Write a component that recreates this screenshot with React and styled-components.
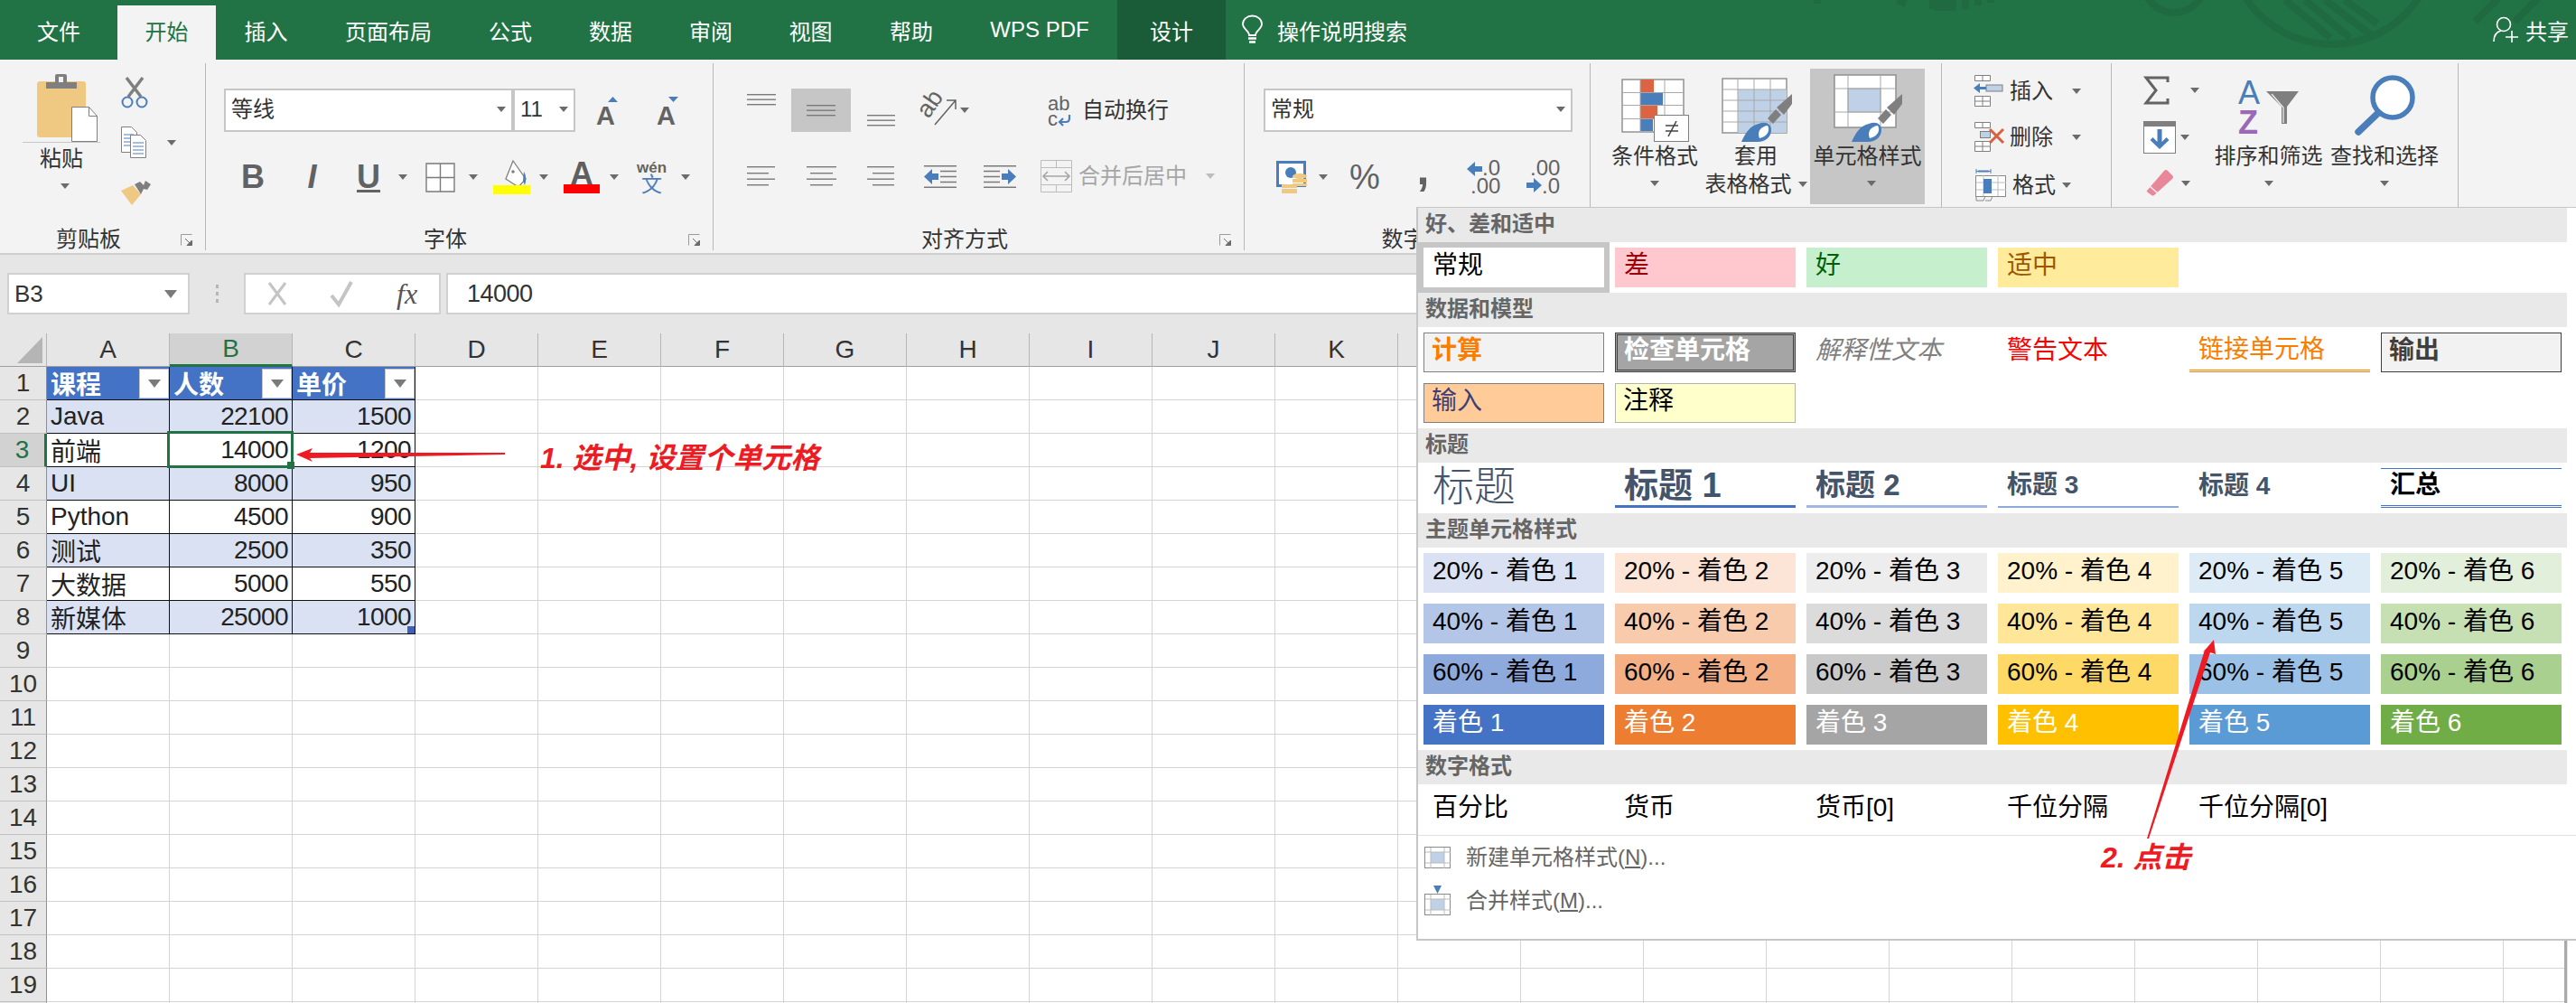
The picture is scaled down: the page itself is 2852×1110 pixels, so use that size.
import React from "react";
import styled, { createGlobalStyle, css } from "styled-components";

const FONT = `"Liberation Sans", "Noto Sans CJK SC", sans-serif`;
const GREEN = "#217346";
const GRAY = "#6b6b6b";
const BLUE = "#4a7eba";

const Global = createGlobalStyle`
  html, body { margin: 0; padding: 0; background: #fff; }
  body { width: 2852px; height: 1110px; overflow: hidden; font-family: ${FONT}; }
  * { box-sizing: border-box; }
`;

const Page = styled.div`
  position: relative;
  width: 2852px;
  height: 1110px;
  overflow: hidden;
  display: flex;
  flex-direction: column;
`;

/* title bar */
const TitleBar = styled.div`
  position: relative;
  flex: none;
  height: 66px;
  display: flex;
  align-items: stretch;
  background: ${GREEN};
  color: #fff;
  font-size: 24px;
`;
const Pattern = styled.svg`
  position: absolute;
  left: 0;
  top: 0;
`;
const Tab = styled.div`
  position: relative;
  flex: none;
  width: ${(p) => p.$w}px;
  display: flex;
  align-items: center;
  justify-content: center;
  ${(p) => p.$active && css`
    margin-top: 6px;
    padding-bottom: 6px;
    background: #f3f3f3;
    color: ${GREEN};
  `}
  ${(p) => p.$dark && css`background: #1a5c38;`}
`;
const Search = styled.div`
  position: relative;
  display: flex;
  align-items: center;
  gap: 14px;
  margin-left: 18px;
`;
const Share = styled.div`
  position: relative;
  display: flex;
  align-items: center;
  gap: 8px;
  margin-left: auto;
  padding-right: 8px;
`;

/* ribbon */
const Ribbon = styled.div`
  flex: none;
  height: 216px;
  display: flex;
  align-items: flex-start;
  background: #f3f3f3;
  border-bottom: 2px solid #cfcfcf;
  color: #333;
  font-size: 24px;
  line-height: 30px;
`;
const Group = styled.div`
  flex: none;
  width: ${(p) => p.$w}px;
  height: 207px;
  margin-top: 4px;
  display: flex;
  flex-direction: column;
  border-right: 1px solid #b8b8b8;
`;
const GroupBody = styled.div`
  flex: 1;
  display: flex;
  flex-direction: ${(p) => (p.$row ? "row" : "column")};
  align-items: flex-start;
`;
const GroupFooter = styled.div`
  flex: none;
  height: 30px;
  padding-top: 6px;
  display: flex;
  align-items: flex-start;
  line-height: 24px;
`;
const GroupLabel = styled.div`
  flex: 1;
  text-align: center;
`;
const Launcher = styled.svg`
  flex: none;
  margin: 6px 14px 0 4px;
`;
const Line = styled.div`
  flex: none;
  display: flex;
  align-items: ${(p) => p.$align || "center"};
  height: ${(p) => p.$h}px;
  margin-top: ${(p) => p.$mt || 0}px;
  padding-left: ${(p) => p.$pl || 0}px;
`;
const Stack = styled.div`
  flex: none;
  display: flex;
  flex-direction: column;
  align-items: flex-start;
  width: ${(p) => (p.$w ? `${p.$w}px` : "auto")};
  padding-top: ${(p) => p.$pt || 0}px;
  margin-left: ${(p) => p.$ml || 0}px;
`;
const Ico = styled.svg`
  display: block;
  flex: none;
  overflow: visible;
  margin-left: ${(p) => p.$ml || 0}px;
  margin-top: ${(p) => p.$mt || 0}px;
`;
const Caret = styled.i`
  display: block;
  flex: none;
  width: 0;
  height: 0;
  border-left: 5px solid transparent;
  border-right: 5px solid transparent;
  border-top: 6px solid ${(p) => p.$c || GRAY};
  margin-left: ${(p) => p.$ml || 0}px;
  margin-top: ${(p) => p.$mt || 0}px;
`;
const ToolText = styled.span`
  flex: none;
  margin-left: ${(p) => p.$ml || 0}px;
  color: ${(p) => p.$c || "#333"};
  white-space: nowrap;
`;
const Mark = styled.span`
  flex: none;
  display: block;
  width: ${(p) => p.$w}px;
  margin-left: ${(p) => p.$ml}px;
  padding-bottom: ${(p) => p.$pb || 0}px;
  color: #626262;
  font-size: ${(p) => p.$size}px;
  line-height: 1;
  text-align: center;
  font-weight: ${(p) => (p.$bold ? 700 : 400)};
  font-style: ${(p) => (p.$italic ? "italic" : "normal")};
  text-decoration: ${(p) => (p.$under ? "underline" : "none")};
`;
const Select = styled.div`
  flex: none;
  display: flex;
  align-items: center;
  justify-content: space-between;
  width: ${(p) => p.$w}px;
  height: 48px;
  padding: 0 6px 2px;
  margin-left: ${(p) => p.$ml || 0}px;
  background: #fff;
  border: 2px solid #c6c6c6;
  font-size: 24px;
`;
const PasteBox = styled.div`
  width: 86px;
  margin-left: 25px;
  padding-top: 12px;
  display: flex;
  flex-direction: column;
  align-items: center;
`;
const PasteIcon = styled.div`
  align-self: stretch;
  padding-left: 16px;
  border-bottom: 1px solid #c6c6c6;
`;
const PasteText = styled.div`
  margin-top: 1px;
  line-height: 34px;
`;
const AlignBox = styled.div`
  flex: none;
  width: ${(p) => p.$w}px;
  height: 48px;
  margin-left: ${(p) => p.$ml}px;
  display: flex;
  align-items: center;
  justify-content: center;
  background: #c6c6c6;
`;
const BigButton = styled.div`
  flex: none;
  width: ${(p) => p.$w}px;
  height: 150px;
  margin-left: ${(p) => p.$ml || 0}px;
  padding-top: ${(p) => p.$pt || 0}px;
  display: flex;
  flex-direction: column;
  align-items: center;
  background: ${(p) => (p.$on ? "#c6c6c6" : "transparent")};
  line-height: 31px;
  white-space: nowrap;
`;
const BigLine = styled.div`
  display: flex;
  align-items: center;
  gap: 7px;
  height: 31px;
`;

/* formula bar */
const FormulaBar = styled.div`
  flex: none;
  height: 87px;
  padding: 20px 8px 0;
  display: flex;
  align-items: flex-start;
  background: #e6e6e6;
  color: #333;
`;
const NameBox = styled.div`
  flex: none;
  width: 202px;
  height: 46px;
  padding: 0 12px 0 6px;
  display: flex;
  align-items: center;
  justify-content: space-between;
  background: #fff;
  border: 2px solid #d0d0d0;
  font-size: 26px;
`;
const Dots = styled.div`
  flex: none;
  width: 3px;
  height: 20px;
  margin: 13px 28px 0 29px;
  background: repeating-linear-gradient(#b4b4b4 0 4px, transparent 4px 8px);
`;
const FxBox = styled.div`
  flex: none;
  width: 218px;
  height: 46px;
  padding-left: 23px;
  display: flex;
  align-items: center;
  gap: 46px;
  background: #fff;
  border: 2px solid #d0d0d0;
`;
const FxText = styled.span`
  margin-left: 2px;
  color: #555;
  font-family: "Liberation Serif", serif;
  font-style: italic;
  font-size: 32px;
`;
const FormulaInput = styled.div`
  flex: 1;
  height: 46px;
  margin-left: 6px;
  padding-left: 21px;
  display: flex;
  align-items: center;
  background: #fff;
  border: 2px solid #d0d0d0;
  font-size: 27px;
  letter-spacing: -0.5px;
`;

/* sheet */
const SheetArea = styled.div`
  flex: 1;
  display: flex;
  align-items: stretch;
  background: #fff;
`;
const Sheet = styled.div`
  flex: none;
  width: 2839px;
  overflow: hidden;
  display: grid;
  grid-template-columns: 52px repeat(21, 136px);
  grid-auto-rows: 37px;
`;
const SheetEdge = styled.div`
  flex: none;
  width: 4px;
  border-left: 3px solid #a9a9a9;
  border-right: 1px solid #e6e6e6;
`;
const Corner = styled.div`
  display: flex;
  align-items: flex-end;
  justify-content: flex-end;
  padding: 0 4px 3px 0;
  background: #e6e6e6;
  border-right: 1px solid #b5b5b5;
  border-bottom: 1px solid #9f9f9f;
`;
const ColHead = styled.div`
  display: flex;
  align-items: center;
  justify-content: center;
  background: ${(p) => (p.$on ? "#d2d2d2" : "#e6e6e6")};
  color: ${(p) => (p.$on ? GREEN : "#333")};
  border-right: 1px solid #b5b5b5;
  border-bottom: ${(p) => (p.$on ? `3px solid ${GREEN}` : "1px solid #9f9f9f")};
  font-size: 28px;
`;
const RowHead = styled.div`
  display: flex;
  align-items: center;
  justify-content: center;
  background: ${(p) => (p.$on ? "#d2d2d2" : "#e6e6e6")};
  color: ${(p) => (p.$on ? GREEN : "#333")};
  border-right: ${(p) => (p.$on ? `3px solid ${GREEN}` : "1px solid #8f8f8f")};
  border-bottom: 1px solid #c0c0c0;
  font-size: 28px;
`;
const Cell = styled.div`
  position: relative;
  display: flex;
  align-items: center;
  justify-content: ${(p) => (p.$num ? "flex-end" : "space-between")};
  padding: ${(p) => (p.$num ? "0 4px 0 0" : "0 0 0 4px")};
  color: #222;
  font-size: 28px;
  letter-spacing: ${(p) => (p.$num ? "-0.6px" : "0")};
  white-space: nowrap;
  border-right: 1px solid #d4d4d4;
  border-bottom: 1px solid #d4d4d4;
  ${(p) => p.$table && css`
    background: ${p.$band ? "#d9e1f2" : "#fff"};
    border-right-color: #111;
    border-bottom-color: #111;
  `}
  ${(p) => p.$head && css`
    background: #4472c4;
    color: #fff;
    font-weight: 700;
  `}
`;
const FilterBtn = styled.span`
  flex: none;
  width: 33px;
  height: 33px;
  margin-top: 1px;
  display: flex;
  align-items: center;
  justify-content: center;
  background: #fff;
  border: 1px solid #c6c6c6;
`;
const Selection = styled.span`
  position: absolute;
  top: -3px;
  left: -3px;
  right: -2px;
  bottom: -2px;
  border: 3px solid ${GREEN};
  z-index: 2;
`;
const Handle = styled.span`
  position: absolute;
  right: -4px;
  bottom: -4px;
  width: 8px;
  height: 8px;
  background: ${GREEN};
`;
const ResizeMark = styled.span`
  position: absolute;
  right: 0;
  bottom: 0;
  width: 8px;
  height: 8px;
  background: #4060b8;
`;

/* cell style gallery */
const Gallery = styled.div`
  position: absolute;
  left: 1568px;
  top: 229px;
  width: 1284px;
  height: 812px;
  background: #fff;
  border-top: 1px solid #c6c6c6;
  border-left: 2px solid #c6c6c6;
  border-bottom: 2px solid #c6c6c6;
  z-index: 3;
`;
const SectionHead = styled.div`
  height: 38px;
  margin-right: 10px;
  padding: 0 0 3px 8px;
  display: flex;
  align-items: center;
  background: #e9e9e9;
  color: #666;
  font-size: 24px;
  line-height: 30px;
  font-weight: 700;
`;
const StyleGrid = styled.div`
  display: grid;
  grid-template-columns: repeat(6, 200px);
  grid-auto-rows: 44px;
  gap: 12px;
  padding: 6px;
`;

const variants = {
  normal: css`background: #fff; color: #000; box-shadow: 0 0 0 6px #c6c6c6;`,
  bad: css`background: #ffc7ce; color: #9c0006;`,
  good: css`background: #c6efce; color: #006100;`,
  neutral: css`background: #ffeb9c; color: #9c5700;`,
  calc: css`background: #f2f2f2; color: #fa7d00; font-weight: 700; border: 1px solid #7f7f7f; padding-left: 8px;`,
  check: css`background: #a5a5a5; color: #fff; font-weight: 700; border: 3px double #3f3f3f; padding-left: 7px;`,
  explain: css`color: #7f7f7f; font-style: italic;`,
  warn: css`color: #ff0000;`,
  link: css`color: #fa7d00; border-bottom: 3px double #ff8001;`,
  output: css`background: #f2f2f2; color: #3f3f3f; font-weight: 700; border: 1px solid #3f3f3f; padding-left: 8px;`,
  input: css`background: #ffcc99; color: #3f3f76; border: 1px solid #7f7f7f; padding-left: 8px;`,
  note: css`background: #ffffcc; color: #000; border: 1px solid #b2b2b2; padding-left: 8px;`,
  title: css`color: #44546a; font-size: 46px; font-weight: 300;`,
  h1: css`color: #44546a; font-size: 38px; font-weight: 700; border-bottom: 3px solid #4472c4;`,
  h2: css`color: #44546a; font-size: 33px; font-weight: 700; border-bottom: 3px solid #a2b8e1;`,
  h3: css`color: #44546a; font-weight: 700; border-bottom: 2px solid #8ea9db;`,
  h4: css`color: #44546a; font-weight: 700;`,
  total: css`color: #000; font-weight: 700; border-top: 1px solid #4472c4; border-bottom: 3px double #4472c4;`,
};
const StyleCell = styled.div`
  display: flex;
  align-items: center;
  min-width: 0;
  padding: 0 0 4px 10px;
  color: #000;
  font-size: 28px;
  line-height: 34px;
  white-space: nowrap;
  background: ${(p) => p.$bg || "transparent"};
  ${(p) => p.$fg && css`color: ${p.$fg};`}
  ${(p) => p.$kind && variants[p.$kind]}
`;
const Separator = styled.div`
  height: 1px;
  background: #e0e0e0;
`;
const MenuItem = styled.div`
  height: 48px;
  padding-left: 7px;
  display: flex;
  align-items: center;
  gap: 16px;
  color: #666;
  font-size: 24px;
  line-height: 30px;
  &:first-of-type { margin-top: 1px; }
`;

/* red notes painted over the screenshot */
const Overlay = styled.svg`
  position: absolute;
  left: 0;
  top: 0;
  z-index: 5;
  pointer-events: none;
`;
const Note = styled.div`
  position: absolute;
  left: ${(p) => p.$x}px;
  top: ${(p) => p.$y}px;
  z-index: 6;
  color: #ed1c24;
  font-size: 32px;
  line-height: 40px;
  font-style: italic;
  font-weight: 700;
  white-space: nowrap;
`;

/* icons */
const Lines = ({ w = 32, h = 13, ml, mt, rows, c = "#7a7a7a" }) => (
  <Ico width={w} height={h} viewBox={`0 0 ${w} ${h}`} $ml={ml} $mt={mt}>
    {rows.map(([x, y, l], i) => (
      <rect key={i} x={x} y={y} width={l} height="1.4" fill={c} />
    ))}
  </Ico>
);
const three = (w) => [[0, 0, w], [0, 5.5, w], [0, 11, w]];
const alignRows = {
  left: [[0, 0, 31], [0, 7, 24], [0, 13.5, 31], [0, 20, 24]],
  center: [[0, 0, 33], [4, 7, 25], [0, 13.5, 33], [4, 20, 25]],
  right: [[0, 0, 30], [6, 7, 24], [0, 13.5, 30], [6, 20, 24]],
};

const PasteSvg = () => (
  <Ico width="67" height="75" viewBox="0 0 67 75">
    <rect x="0" y="8" width="54" height="62" rx="3" fill="#efc881" />
    <path d="M10 16V9h10V2q0-2 2-2h9q2 0 2 2v7h11v7z" fill="#7f7f7f" />
    <rect x="24" y="3" width="5" height="6" fill="#f3f3f3" />
    <path d="M38.5 36.5h19l9 10v28h-28z" fill="#fff" stroke="#7f7f7f" />
    <path d="M57.500 36.500v10h9" fill="none" stroke="#7f7f7f" />
  </Ico>
);
const CutSvg = () => (
  <Ico width="30" height="34" viewBox="0 0 30 34">
    <path d="M6 0L22 21M24 0L8 21" stroke="#7f7f7f" strokeWidth="3.500" fill="none" />
    <circle cx="7" cy="27" r="5.500" fill="none" stroke={BLUE} strokeWidth="2" />
    <circle cx="23" cy="27" r="5.500" fill="none" stroke={BLUE} strokeWidth="2" />
  </Ico>
);
const CopySvg = () => (
  <Ico width="30" height="35" viewBox="0 0 30 35" $mt={0}>
    <path d="M.500.500h11l6 6v22H.500z" fill="#fff" stroke="#7f7f7f" />
    <path d="M3 9h11M3 13h11M3 17h11M3 21h11" stroke={BLUE} />
    <path d="M10.500 9.500h11l6 6v19h-17z" fill="#fff" stroke="#7f7f7f" />
    <path d="M13 18h12M13 22h12M13 26h12M13 30h12" stroke={BLUE} />
  </Ico>
);
const BrushSvg = () => (
  <Ico width="33" height="27" viewBox="0 0 33 27" $mt={25}>
    <path d="M0 11l13-6 9 10-10 12z" fill="#efc881" />
    <path d="M15 4l6-3 4 4 2-5 6 4-4 6-4-1-3 6z" fill="#7f7f7f" />
  </Ico>
);
const GrowSvg = ({ down, ml }) => (
  <Ico width="25" height="31" viewBox="0 0 25 31" $ml={ml}>
    <text x="0" y="31" fontFamily="Liberation Sans" fontWeight="700" fontSize="29" fill="#636363">A</text>
    <path d={down ? "M13 0h11l-5.500 6z" : "M13 6h11l-5.500-6z"} fill={BLUE} />
  </Ico>
);
const BordersSvg = ({ ml }) => (
  <Ico width="33" height="33" viewBox="0 0 33 33" $ml={ml}>
    <path d="M1 1h31v31H1zM16.500 1v31M1 16.500h31" fill="#fff" stroke="#7a7a7a" strokeWidth="1.400" />
  </Ico>
);
const FillSvg = ({ ml }) => (
  <Ico width="41" height="38" viewBox="0 0 41 38" $ml={ml}>
    <path d="M22 1l14 20-8 9-14-9z" fill="#fff" stroke="#7f7f7f" strokeWidth="1.300" />
    <path d="M34 13q4 6 1 15l-2-5z" fill={BLUE} />
    <circle cx="22" cy="13" r="1.800" fill="#7f7f7f" />
    <rect x="0" y="28" width="41" height="10" fill="#ffff00" />
  </Ico>
);
const FontColorSvg = ({ ml }) => (
  <Ico width="40" height="36" viewBox="0 0 40 36" $ml={ml}>
    <text x="20" y="27" textAnchor="middle" fontFamily="Liberation Sans" fontWeight="700" fontSize="36" fill="#5f5f5f">A</text>
    <rect x="0" y="26" width="40" height="10" fill="#ff0000" />
  </Ico>
);
const WenSvg = ({ ml }) => (
  <Ico width="33" height="36" viewBox="0 0 33 36" $ml={ml}>
    <text x="16.500" y="13" textAnchor="middle" fontFamily="Liberation Sans" fontWeight="700" fontSize="17" fill="#636363">wén</text>
    <text x="16.500" y="34" textAnchor="middle" fontFamily="Noto Sans CJK SC" fontSize="23" fill={BLUE}>文</text>
  </Ico>
);
const OrientSvg = ({ ml }) => (
  <Ico width="38" height="34" viewBox="0 0 38 34" $ml={ml}>
    <text x="0" y="0" transform="translate(6 27) rotate(-55)" fontFamily="Liberation Sans" fontSize="27" fill="#636363">ab</text>
    <path d="M13 33L36 6M26 6h10v10" fill="none" stroke="#636363" strokeWidth="1.500" />
  </Ico>
);
const WrapSvg = ({ ml }) => (
  <Ico width="27" height="33" viewBox="0 0 27 33" $ml={ml}>
    <text x="0" y="16" fontFamily="Liberation Sans" fontSize="22" fill="#636363">ab</text>
    <text x="0" y="33" fontFamily="Liberation Sans" fontSize="22" fill="#636363">c</text>
    <path d="M24 21v4q0 4-4 4h-7M17 25l-4 4 4 4" fill="none" stroke={BLUE} strokeWidth="2.200" />
  </Ico>
);
const IndentSvg = ({ ml, flip }) => (
  <Ico width="36" height="25" viewBox="0 0 36 25" $ml={ml}>
    <g transform={flip ? "translate(36 0) scale(-1 1)" : undefined}>
      <path d="M0 .700h36M0 24.300h36M18 6.500h18M18 12.500h18M18 18.500h18" stroke="#7a7a7a" strokeWidth="1.400" />
      <path d="M0 12.500L9 4v5h7v7H9v5z" fill={BLUE} />
    </g>
  </Ico>
);
const MergeSvg = ({ ml }) => (
  <Ico width="35" height="36" viewBox="0 0 35 36" $ml={ml}>
    <path d="M.500.500h34v35H.500zM.500 8.500h34M.500 27.500h34M17.500.500v8M17.500 27.500v8" fill="none" stroke="#bcbcbc" />
    <path d="M3 18h29M8 13l-5 5 5 5M27 13l5 5-5 5" fill="none" stroke="#a6a6a6" strokeWidth="1.600" />
  </Ico>
);
const MoneySvg = ({ ml }) => (
  <Ico width="36" height="37" viewBox="0 0 36 37" $ml={ml}>
    <rect x="1.500" y="1.500" width="30" height="26" fill="#fff" stroke={BLUE} strokeWidth="3" />
    <circle cx="16" cy="13" r="6" fill={BLUE} />
    <ellipse cx="26" cy="17" rx="8" ry="3" fill="#efc881" />
    <path d="M18 20h16v4H18zM18 25h16v3H18z" fill="#efc881" />
    <path d="M6 26h17v4H6zM6 31h17v5H6z" fill="#efc881" />
  </Ico>
);
const DecimalSvg = ({ ml, more }) => (
  <Ico width="35" height="36" viewBox="0 0 35 36" $ml={ml}>
    <g fontFamily="Liberation Sans" fontSize="24" fill="#636363">
      {more ? (
        <>
          <text x="4" y="16">.00</text>
          <text x="17" y="36">.0</text>
          <path d="M0 24h8v-5l9 8-9 8v-5H0z" fill={BLUE} />
        </>
      ) : (
        <>
          <text x="17" y="16">.0</text>
          <text x="4" y="36">.00</text>
          <path d="M17 4H9V-1L0 7l9 8v-5h8z" fill={BLUE} transform="translate(0 2)" />
        </>
      )}
    </g>
  </Ico>
);
const BrushTip = ({ x, y }) => (
  <g transform={`translate(${x} ${y})`}>
    <path d="M0 53C5 42 10 35 19 33C27 30 33 33 33 40C33 47 27 53 18 53Z" fill={BLUE} />
    <path d="M20 49C17 42 21 36 29 35C32 40 29 47 20 49Z" fill="#fff" />
    <path d="M29 27l9-10 6 6-9 10z" fill="#7f7f7f" />
    <path d="M39 15L56 0v11l-9 12z" fill="#7f7f7f" />
  </g>
);
const CondSvg = () => (
  <Ico width="75" height="70" viewBox="0 0 75 70">
    <rect x="1" y="1" width="68" height="58" fill="#fff" stroke="#8a8a8a" strokeWidth="1.400" />
    <rect x="21" y="1" width="15" height="14" fill="#dc6442" />
    <rect x="21" y="16" width="25" height="13" fill={BLUE} />
    <rect x="21" y="30" width="19" height="14" fill="#dc6442" />
    <rect x="21" y="45" width="14" height="13" fill={BLUE} />
    <path d="M21 1v58M48 1v58M1 15.500h68M1 29.500h68M1 44.500h68" stroke="#a8a8a8" fill="none" />
    <rect x="36.500" y="40.500" width="38" height="29" fill="#fff" stroke="#7f7f7f" />
    <path d="M49 52h14M49 58h14M52 64l9-17" stroke="#444" strokeWidth="1.600" />
  </Ico>
);
const TableStyleSvg = () => (
  <Ico width="77" height="71" viewBox="0 0 77 71">
    <rect x="1" y="1" width="71" height="60" fill="#fff" stroke="#8a8a8a" strokeWidth="1.400" />
    <rect x="18" y="13" width="54" height="48" fill="#bfd1e6" />
    <path d="M18 1v60M36 1v60M54 1v60M1 13h71M1 25h71M1 37h71M1 49h71" stroke="#a8a8a8" fill="none" />
    <BrushTip x="22" y="18" />
  </Ico>
);
const CellStyleSvg = () => (
  <Ico width="75" height="75" viewBox="0 0 75 75">
    <rect x="1" y="1" width="68" height="58" fill="#fff" stroke="#8a8a8a" strokeWidth="1.400" />
    <rect x="16" y="16" width="36" height="26" fill="#bfd1e6" stroke="#a8a8a8" />
    <path d="M16 1v58M52 1v58M1 16h68M1 42h68" stroke="#a8a8a8" fill="none" />
    <BrushTip x="20" y="22" />
  </Ico>
);
const InsertSvg = () => (
  <Ico width="33" height="35" viewBox="0 0 33 35">
    <path d="M1.500.500h17v6h-17zM10 .500v6M1.500 23.500h17v11h-17zM1.500 29h17M10 23.500v11" fill="#fff" stroke="#7f7f7f" />
    <rect x="14" y="11" width="18" height="7" fill="#bfd1e6" stroke="#7f7f7f" />
    <path d="M0 14.500L7 9v4h7v3H7v4z" fill={BLUE} />
  </Ico>
);
const DeleteSvg = () => (
  <Ico width="35" height="33" viewBox="0 0 35 33">
    <path d="M1.500.500h17v6h-17zM10 .500v6M1.500 21.500h17v11h-17zM1.500 27h17M10 21.500v11" fill="#fff" stroke="#7f7f7f" />
    <rect x="7.500" y="10.500" width="11" height="7" fill="#bfd1e6" stroke="#7f7f7f" />
    <path d="M18 8l15 15M33 8L18 23" stroke="#d9603f" strokeWidth="3" />
  </Ico>
);
const FormatSvg = () => (
  <Ico width="35" height="37" viewBox="0 0 35 37">
    <path d="M1 1v5M17 1v5M1 3.500h16" stroke={BLUE} fill="none" />
    <path d="M3 3.500h12" stroke={BLUE} strokeWidth="2" />
    <rect x=".500" y="8.500" width="33" height="23" fill="#fff" stroke="#8a8a8a" />
    <path d="M9 8v23M25 8v23M1 16h33M1 24h33" stroke="#bcbcbc" />
    <rect x="9" y="12" width="9" height="16" fill={BLUE} />
    <path d="M1 31v5h8l2-5M11 36h6l2-5" fill="none" stroke="#8a8a8a" />
  </Ico>
);
const SigmaSvg = () => (
  <Ico width="28" height="32" viewBox="0 0 28 32">
    <path d="M27 7V2H3l11 14L3 30h24v-5" fill="none" stroke="#636363" strokeWidth="3" />
  </Ico>
);
const FillDownSvg = () => (
  <Ico width="36" height="36" viewBox="0 0 36 36">
    <rect x=".500" y=".500" width="35" height="35" fill="#fff" stroke="#7f7f7f" />
    <rect x="0" y="0" width="36" height="6" fill="#7f7f7f" />
    <path d="M15.500 9h5v14l5-5 3 3-10.500 10L7.500 21l3-3 5 5z" fill={BLUE} />
  </Ico>
);
const EraserSvg = () => (
  <Ico width="29" height="29" viewBox="0 0 29 29" $ml={4}>
    <path d="M0 23L19 1q2-2 4 0l5 5q2 2 0 4L8 28q-2 1-3 0l-4-3q-2-1-1-2z" fill="#e9879a" />
    <path d="M3 18l9 8" stroke="#f3f3f3" strokeWidth="1.500" />
  </Ico>
);
const SortSvg = () => (
  <Ico width="68" height="71" viewBox="0 0 68 71">
    <text x="0" y="29" fontFamily="Liberation Sans" fontSize="36" fill={BLUE}>A</text>
    <text x="0" y="62" fontFamily="Liberation Sans" fontWeight="700" fontSize="36" fill="#9a69b6">Z</text>
    <path d="M31 15h36L54 32v19h-6V32z" fill="#7f7f7f" />
    <path d="M37 18l13 15v17" fill="none" stroke="#f3f3f3" strokeWidth="1.200" />
  </Ico>
);
const FindSvg = () => (
  <Ico width="68" height="74" viewBox="0 0 68 74">
    <circle cx="43" cy="25" r="22" fill="#fff" stroke={BLUE} strokeWidth="5.500" />
    <path d="M27 42L5 63" stroke={BLUE} strokeWidth="7.500" strokeLinecap="round" />
  </Ico>
);
const LaunchSvg = () => (
  <Launcher width="13" height="13" viewBox="0 0 13 13">
    <path d="M.500 12.500V.500h12" fill="none" stroke="#9a9a9a" />
    <path d="M5 5l5 5M12.500 7v5.500H7z" stroke="#6b6b6b" fill="#6b6b6b" />
  </Launcher>
);
const CrossSvg = () => (
  <Ico width="24" height="28" viewBox="0 0 24 28">
    <path d="M3 2l18 24M21 2L3 26" stroke="#c4c4c4" strokeWidth="3" />
  </Ico>
);
const CheckSvg = () => (
  <Ico width="26" height="28" viewBox="0 0 26 28">
    <path d="M2 16l8 10L24 1" fill="none" stroke="#c4c4c4" strokeWidth="4" />
  </Ico>
);
const NewStyleSvg = ({ merge }) => (
  <Ico width="30" height={merge ? 34 : 25} viewBox={merge ? "0 -9 30 34" : "0 0 30 25"}>
    <rect x=".500" y=".500" width="28" height="23" fill="#fff" stroke="#8a8a8a" />
    <rect x="7" y="6" width="15" height="12" fill="#bfd1e6" />
    <path d="M7 1v23M22 1v23M1 6h28M1 18h28" stroke="#bcbcbc" />
    {merge && <path d="M10-9h9l-4.500 9z" fill={BLUE} />}
  </Ico>
);

const TABS = [
  ["文件", 130], ["开始", 109, "active"], ["插入", 111], ["页面布局", 160], ["公式", 110],
  ["数据", 112], ["审阅", 110], ["视图", 111], ["帮助", 112], ["WPS PDF", 172], ["设计", 120, "dark"],
];

const NAMES = ["课程", "人数", "单价"];
const ROWS = [
  ["Java", 22100, 1500], ["前端", 14000, 1200], ["UI", 8000, 950], ["Python", 4500, 900],
  ["测试", 2500, 350], ["大数据", 5000, 550], ["新媒体", 25000, 1000],
];
const COLS = "ABCDEFGHIJKLMNOPQRSTU".split("");

const THEME = [
  ["20% - 着色", ["#d9e1f2", "#fce4d6", "#ededed", "#fff2cc", "#ddebf7", "#e2efda"]],
  ["40% - 着色", ["#b4c6e7", "#f8cbad", "#dbdbdb", "#ffe699", "#bdd7ee", "#c6e0b4"]],
  ["60% - 着色", ["#8ea9db", "#f4b084", "#c9c9c9", "#ffd966", "#9bc2e6", "#a9d08e"]],
  ["着色", ["#4472c4", "#ed7d31", "#a5a5a5", "#ffc000", "#5b9bd5", "#70ad47"]],
];

const Triangle = styled.i`
  width: 0;
  height: 0;
  border-left: 7px solid transparent;
  border-right: 7px solid transparent;
  border-top: 9px solid #7a7a7a;
`;

const renderSheet = () => {
  const out = [
    <Corner key="corner">
      <Ico width="28" height="29" viewBox="0 0 28 29"><path d="M28 0v29H0z" fill="#b5b5b5" /></Ico>
    </Corner>,
  ];
  COLS.forEach((c) => out.push(<ColHead key={c} $on={c === "B"}>{c}</ColHead>));
  for (let r = 1; r <= 20; r++) {
    out.push(<RowHead key={`h${r}`} $on={r === 3}>{r}</RowHead>);
    COLS.forEach((c, i) => {
      const key = `${c}${r}`;
      if (i < 3 && r === 1) {
        out.push(
          <Cell key={key} $table $head>
            {NAMES[i]}
            <FilterBtn><Triangle /></FilterBtn>
          </Cell>
        );
      } else if (i < 3 && r <= 8) {
        out.push(
          <Cell key={key} $table $band={r % 2 === 0} $num={i > 0}>
            {ROWS[r - 2][i]}
            {key === "B3" && <Selection><Handle /></Selection>}
            {key === "C8" && <ResizeMark />}
          </Cell>
        );
      } else {
        out.push(<Cell key={key} />);
      }
    });
  }
  return out;
};

export default function App() {
  return (
    <Page>
      <Global />
      <TitleBar>
        <Pattern width="2852" height="66" viewBox="0 0 2852 66">
          <g fill="none" stroke="#1f6a41" strokeWidth="8">
            <circle cx="2582" cy="-66" r="115" />
            <circle cx="2407" cy="-20" r="34" />
            <path d="M2530 0l50 42M2552 0l50 42M2574 0l50 38M2596 0l36 26M2740 24L2770-6M2784 24L2814-6" />
            <path d="M2012 0v4M2100 0l10 4M2140 0v10M2176 0v10M2190 0v6M2204 0v3" />
          </g>
          <rect x="2142" y="0" width="24" height="12" fill="#1f6a41" />
        </Pattern>
        {TABS.map(([t, w, kind]) => (
          <Tab key={t} $w={w} $active={kind === "active"} $dark={kind === "dark"}>{t}</Tab>
        ))}
        <Search>
          <Ico width="25" height="32" viewBox="0 0 25 32">
            <path d="M8 22C8 17 1 15 1 9.500A10.500 9 0 0 1 22 9.500C22 15 15 17 15 22Z" fill="none" stroke="#fff" strokeWidth="1.800" />
            <path d="M7 25.500h9M8 29.500h7" stroke="#fff" strokeWidth="2.600" />
          </Ico>
          操作说明搜索
        </Search>
        <Share>
          <Ico width="28" height="30" viewBox="0 0 28 30">
            <circle cx="12" cy="9" r="7.500" fill="none" stroke="#fff" strokeWidth="1.600" />
            <path d="M1 28q0-10 8-12M21 16v13M14 23h14" fill="none" stroke="#fff" strokeWidth="1.600" />
          </Ico>
          共享
        </Share>
      </TitleBar>

      <Ribbon>
        <Group $w={228}>
          <GroupBody $row>
            <PasteBox>
              <PasteIcon><PasteSvg /></PasteIcon>
              <PasteText>粘贴</PasteText>
              <Caret $mt={10} $ml={8} />
            </PasteBox>
            <Stack $ml={23} $pt={16}>
              <CutSvg />
              <Line $h={35} $mt={20}>
                <CopySvg />
                <Caret $ml={21} />
              </Line>
              <BrushSvg />
            </Stack>
          </GroupBody>
          <GroupFooter><GroupLabel>剪贴板</GroupLabel><LaunchSvg /></GroupFooter>
        </Group>

        <Group $w={562}>
          <GroupBody>
            <Line $h={48} $mt={28} $pl={20}>
              <Select $w={320}><span>等线</span><Caret /></Select>
              <Select $w={69}><span>11</span><Caret /></Select>
              <GrowSvg ml={23} />
              <GrowSvg ml={42} down />
            </Line>
            <Line $h={38} $mt={31}>
              <Mark $ml={39} $w={22} $size={36} $bold>B</Mark>
              <Mark $ml={47} $w={19} $size={36} $bold $italic>I</Mark>
              <Mark $ml={40} $w={23} $size={36} $bold $under>U</Mark>
              <Caret $ml={23} />
              <BordersSvg ml={20} />
              <Caret $ml={15} />
              <FillSvg ml={17} />
              <Caret $ml={10} />
              <FontColorSvg ml={17} />
              <Caret $ml={11} />
              <WenSvg ml={20} />
              <Caret $ml={16} />
            </Line>
          </GroupBody>
          <GroupFooter><GroupLabel>字体</GroupLabel><LaunchSvg /></GroupFooter>
        </Group>

        <Group $w={588}>
          <GroupBody>
            <Line $h={48} $mt={28} $pl={37} $align="flex-start">
              <Lines mt={6} rows={three(32)} />
              <AlignBox $ml={17} $w={66}><Lines rows={three(32)} /></AlignBox>
              <Lines w={31} ml={18} mt={29} rows={three(31)} />
              <Line $h={48}>
                <OrientSvg ml={31} />
                <Caret $ml={3} />
                <WrapSvg ml={87} />
                <ToolText $ml={11}>自动换行</ToolText>
              </Line>
            </Line>
            <Line $h={36} $mt={31} $pl={37}>
              <Lines w={31} h={22} rows={alignRows.left} />
              <Lines w={33} h={22} ml={35} rows={alignRows.center} />
              <Lines w={30} h={22} ml={34} rows={alignRows.right} />
              <IndentSvg ml={33} />
              <IndentSvg ml={30} flip />
              <MergeSvg ml={27} />
              <ToolText $ml={7} $c="#a6a6a6">合并后居中</ToolText>
              <Caret $ml={21} $c="#bdbdbd" />
            </Line>
          </GroupBody>
          <GroupFooter><GroupLabel>对齐方式</GroupLabel><LaunchSvg /></GroupFooter>
        </Group>

        <Group $w={383}>
          <GroupBody>
            <Line $h={48} $mt={28}>
              <Select $ml={21} $w={342}><span>常规</span><Caret /></Select>
            </Line>
            <Line $h={38} $mt={31} $pl={35}>
              <MoneySvg />
              <Caret $ml={11} />
              <Mark $ml={24} $w={31} $size={38}>%</Mark>
              <Mark $ml={43} $w={15} $size={50} $bold $pb={18}>,</Mark>
              <DecimalSvg ml={41} />
              <DecimalSvg ml={31} more />
            </Line>
          </GroupBody>
          <GroupFooter><GroupLabel>数字</GroupLabel><LaunchSvg /></GroupFooter>
        </Group>

        <Group $w={389}>
          <GroupBody $row>
            <Line $h={150} $mt={6} $align="flex-start">
              <BigButton $ml={19} $w={104} $pt={11}>
                <CondSvg />
                <BigLine>条件格式</BigLine>
                <Caret $mt={12} />
              </BigButton>
              <BigButton $ml={1} $w={118} $pt={10}>
                <TableStyleSvg />
                <BigLine>套用</BigLine>
                <BigLine>表格格式<Caret /></BigLine>
              </BigButton>
              <BigButton $ml={1} $w={127} $pt={6} $on>
                <CellStyleSvg />
                <BigLine>单元格样式</BigLine>
                <Caret $mt={12} $ml={8} />
              </BigButton>
            </Line>
          </GroupBody>
        </Group>

        <Group $w={188}>
          <GroupBody>
            <Stack $ml={35} $pt={13}>
              <Line $h={35}>
                <InsertSvg />
                <ToolText $ml={7}>插入</ToolText>
                <Caret $ml={21} />
              </Line>
              <Line $h={33} $mt={17}>
                <DeleteSvg />
                <ToolText $ml={5}>删除</ToolText>
                <Caret $ml={21} />
              </Line>
              <Line $h={37} $mt={18} $pl={2}>
                <FormatSvg />
                <ToolText $ml={6}>格式</ToolText>
                <Caret $ml={7} />
              </Line>
            </Stack>
          </GroupBody>
        </Group>

        <Group $w={384}>
          <GroupBody $row>
            <Stack $ml={35} $w={75} $pt={14}>
              <Line $h={32}>
                <SigmaSvg />
                <Caret $ml={24} />
              </Line>
              <Line $h={36} $mt={18}>
                <FillDownSvg />
                <Caret $ml={5} />
              </Line>
              <Line $h={29} $mt={18}>
                <EraserSvg />
                <Caret $ml={9} />
              </Line>
            </Stack>
            <Line $h={150} $mt={6} $align="flex-start">
              <BigButton $w={127} $pt={10}>
                <SortSvg />
                <BigLine>排序和筛选</BigLine>
                <Caret $mt={12} />
              </BigButton>
              <BigButton $ml={1} $w={128} $pt={7}>
                <FindSvg />
                <BigLine>查找和选择</BigLine>
                <Caret $mt={12} />
              </BigButton>
            </Line>
          </GroupBody>
        </Group>
      </Ribbon>

      <FormulaBar>
        <NameBox>B3<Triangle /></NameBox>
        <Dots />
        <FxBox>
          <CrossSvg />
          <CheckSvg />
          <FxText>fx</FxText>
        </FxBox>
        <FormulaInput>14000</FormulaInput>
      </FormulaBar>

      <SheetArea>
        <Sheet>{renderSheet()}</Sheet>
        <SheetEdge />
      </SheetArea>

      <Gallery>
        <SectionHead>好、差和适中</SectionHead>
        <StyleGrid>
          <StyleCell $kind="normal">常规</StyleCell>
          <StyleCell $kind="bad">差</StyleCell>
          <StyleCell $kind="good">好</StyleCell>
          <StyleCell $kind="neutral">适中</StyleCell>
        </StyleGrid>
        <SectionHead>数据和模型</SectionHead>
        <StyleGrid>
          <StyleCell $kind="calc">计算</StyleCell>
          <StyleCell $kind="check">检查单元格</StyleCell>
          <StyleCell $kind="explain">解释性文本</StyleCell>
          <StyleCell $kind="warn">警告文本</StyleCell>
          <StyleCell $kind="link">链接单元格</StyleCell>
          <StyleCell $kind="output">输出</StyleCell>
          <StyleCell $kind="input">输入</StyleCell>
          <StyleCell $kind="note">注释</StyleCell>
        </StyleGrid>
        <SectionHead>标题</SectionHead>
        <StyleGrid>
          <StyleCell $kind="title">标题</StyleCell>
          <StyleCell $kind="h1">标题 1</StyleCell>
          <StyleCell $kind="h2">标题 2</StyleCell>
          <StyleCell $kind="h3">标题 3</StyleCell>
          <StyleCell $kind="h4">标题 4</StyleCell>
          <StyleCell $kind="total">汇总</StyleCell>
        </StyleGrid>
        <SectionHead>主题单元格样式</SectionHead>
        <StyleGrid>
          {THEME.flatMap(([label, colors], r) =>
            colors.map((bg, i) => (
              <StyleCell key={`${r}-${i}`} $bg={bg} $fg={r === 3 ? "#fff" : "#000"}>
                {label} {i + 1}
              </StyleCell>
            ))
          )}
        </StyleGrid>
        <SectionHead>数字格式</SectionHead>
        <StyleGrid>
          {["百分比", "货币", "货币[0]", "千位分隔", "千位分隔[0]"].map((t) => (
            <StyleCell key={t}>{t}</StyleCell>
          ))}
        </StyleGrid>
        <Separator />
        <MenuItem><NewStyleSvg /><span>新建单元格样式(<u>N</u>)...</span></MenuItem>
        <MenuItem><NewStyleSvg merge /><span>合并样式(<u>M</u>)...</span></MenuItem>
      </Gallery>

      <Overlay width="2852" height="1110" viewBox="0 0 2852 1110">
        <polygon points="328,503 346,496 343,501 559,501 559,503 343,507 346,511" fill="#ed1c24" />
        <polygon points="2451,708 2453,724 2447,722 2379,928 2377,928 2441,719 2438,723" fill="#ed1c24" />
      </Overlay>
      <Note $x={598} $y={487}>1. 选中, 设置个单元格</Note>
      <Note $x={2326} $y={929}>2. 点击</Note>
    </Page>
  );
}
